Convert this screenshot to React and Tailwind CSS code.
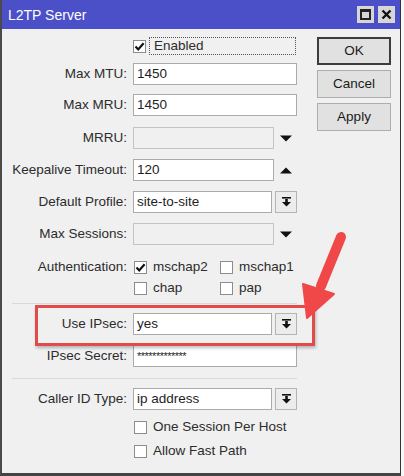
import React from "react";

const F = "font-['Liberation_Sans',Arial,sans-serif]";

function Check({ checked }) {
  return (
    <span className="w-[13px] h-[13px] border border-[#8c8c8c] bg-white flex items-center justify-center shrink-0">
      {checked && (
        <svg width="11" height="11" viewBox="0 0 11 11">
          <path d="M1.5 5.6 L4.2 8.4 L9.6 2.2" stroke="#111" strokeWidth="2.2" fill="none" />
        </svg>
      )}
    </span>
  );
}

function Label({ children }) {
  return <div className="w-[125px] text-right pr-0 shrink-0 whitespace-nowrap">{children}</div>;
}

function Input({ value, w = "w-[164px]", disabled, small }) {
  return (
    <div
      className={`${w} h-[22px] border border-[#ababab] ${disabled ? "bg-[#f0f0f0] border-[#c4c4c4]" : "bg-white"} flex items-center pl-[3px] text-[#1e1e1e] ${small ? "text-[11px] tracking-[-0.5px]" : ""}`}
    >
      {value}
    </div>
  );
}

function ComboIcon() {
  return (
    <svg width="11" height="12" viewBox="0 0 11 12">
      <rect x="1" y="1" width="9" height="1.6" fill="#111" />
      <rect x="4.2" y="3" width="2.6" height="3.5" fill="#111" />
      <path d="M1 6 L10 6 L5.5 10.5 Z" fill="#111" />
    </svg>
  );
}

function ComboBtn() {
  return (
    <div className="w-[22px] h-[22px] border border-[#b4b4b4] bg-[#ececec] flex items-center justify-center ml-[3px]">
      <ComboIcon />
    </div>
  );
}

function Tri({ up }) {
  return (
    <svg width="12" height="7" viewBox="0 0 12 7" className="ml-[6px]">
      {up ? <path d="M0 6.5 L12 6.5 L6 0.5 Z" fill="#111" /> : <path d="M0 0.5 L12 0.5 L6 6.5 Z" fill="#111" />}
    </svg>
  );
}

function Row({ label, children, cls = "" }) {
  return (
    <div className={`flex items-center h-[22px] ${cls}`}>
      <Label>{label}</Label>
      <div className="ml-[6px] flex items-center">{children}</div>
    </div>
  );
}

function Btn({ children, def }) {
  return (
    <div
      className={`w-[74px] h-[28px] flex items-center justify-center bg-[#e1e1e1] ${def ? "border-2 border-[#3c3c3c]" : "border border-[#adadad]"} text-[#1a1a1a]`}
    >
      {children}
    </div>
  );
}

export default function App() {
  return (
    <div className={`relative w-[404px] h-[476px] flex bg-[#f4f4f4] text-[13.5px] ${F} text-[#2c2c2c] overflow-hidden`}>
      <div className="w-[401px] h-[476px] flex flex-col border-l-2 border-l-[#4a4a4a] border-b-[3px] border-b-[#444] border-r border-r-[#333] bg-[#f0f0f0]">
        {/* title bar */}
        <div className="h-[29px] bg-[#4b50c8] flex items-center pl-[6px] pr-[5px] shrink-0">
          <span className="text-white text-[14px] leading-none pt-[1px]">L2TP Server</span>
          <div className="ml-auto flex gap-[4px]">
            <div className="w-[17px] h-[17px] bg-[#d6d6d6] flex items-center justify-center">
              <div className="w-[11px] h-[11px] border-2 border-[#222] border-t-[3px]" />
            </div>
            <div className="w-[17px] h-[17px] bg-[#d6d6d6] flex items-center justify-center">
              <svg width="11" height="11" viewBox="0 0 11 11">
                <path d="M1.5 1.5 L9.5 9.5 M9.5 1.5 L1.5 9.5" stroke="#111" strokeWidth="2.4" />
              </svg>
            </div>
          </div>
        </div>
        {/* body */}
        <div className="flex flex-1">
          <div className="w-[295px] flex flex-col pt-[8px]">
            <div className="flex items-center h-[18px]">
              <div className="w-[131px] shrink-0" />
              <Check checked />
              <div className="ml-[3px] w-[147px] h-[18px] border border-dotted border-[#555] flex items-center pl-[4px]">Enabled</div>
            </div>
            <Row label="Max MTU:" cls="mt-[8px]">
              <Input value="1450" />
            </Row>
            <Row label="Max MRU:" cls="mt-[9px]">
              <Input value="1450" />
            </Row>
            <Row label="MRRU:" cls="mt-[11px]">
              <Input w="w-[141px]" disabled />
              <Tri />
            </Row>
            <Row label="Keepalive Timeout:" cls="mt-[10px]">
              <Input w="w-[141px]" value="120" />
              <Tri up />
            </Row>
            <Row label="Default Profile:" cls="mt-[10px]">
              <Input w="w-[139px]" value="site-to-site" />
              <ComboBtn />
            </Row>
            <Row label="Max Sessions:" cls="mt-[10px]">
              <Input w="w-[141px]" disabled />
              <Tri />
            </Row>
            <div className="flex items-center h-[20px] mt-[12px]">
              <Label>Authentication:</Label>
              <div className="ml-[7px] flex items-center w-[86px]">
                <Check checked />
                <span className="ml-[6px]">mschap2</span>
              </div>
              <div className="flex items-center">
                <Check />
                <span className="ml-[6px]">mschap1</span>
              </div>
            </div>
            <div className="flex items-center h-[20px] mt-[1px]">
              <div className="w-[125px] shrink-0" />
              <div className="ml-[7px] flex items-center w-[86px]">
                <Check />
                <span className="ml-[6px]">chap</span>
              </div>
              <div className="flex items-center">
                <Check />
                <span className="ml-[6px]">pap</span>
              </div>
            </div>
            <div className="ml-[10px] mt-[5px] h-px bg-[#d9d9d9]" />
            <Row label="Use IPsec:" cls="mt-[9px]">
              <Input w="w-[139px]" value="yes" />
              <ComboBtn />
            </Row>
            <Row label="IPsec Secret:" cls="mt-[10px]">
              <Input value="*************" small />
            </Row>
            <div className="ml-[10px] mt-[11px] h-px bg-[#d9d9d9]" />
            <Row label="Caller ID Type:" cls="mt-[9px]">
              <Input w="w-[139px]" value="ip address" />
              <ComboBtn />
            </Row>
            <div className="flex items-center h-[20px] mt-[7px]">
              <div className="w-[132px] shrink-0" />
              <Check />
              <span className="ml-[6px]">One Session Per Host</span>
            </div>
            <div className="flex items-center h-[20px] mt-[4px]">
              <div className="w-[132px] shrink-0" />
              <Check />
              <span className="ml-[6px]">Allow Fast Path</span>
            </div>
          </div>
          <div className="ml-[20px] pt-[8px] flex flex-col gap-[5px]">
            <Btn def>OK</Btn>
            <Btn>Cancel</Btn>
            <Btn>Apply</Btn>
          </div>
        </div>
      </div>
      <div className="flex-1 bg-[#f7f7f7]" />
      {/* highlight box */}
      <div className="absolute left-[35px] top-[305px] w-[280px] h-[41px] border-[3px] border-[#e34a4a] shadow-[1px_2px_3px_rgba(0,0,0,0.25)] pointer-events-none" />
      {/* arrow */}
      <svg className="absolute left-0 top-0 pointer-events-none" width="404" height="476" viewBox="0 0 404 476">
        <line x1="341" y1="237" x2="321" y2="286" stroke="#f04848" strokeWidth="10" strokeLinecap="round" />
        <path d="M303 284 L334 294 L307 318 Z" fill="#f04848" stroke="#f04848" strokeWidth="2" strokeLinejoin="round" />
      </svg>
    </div>
  );
}
